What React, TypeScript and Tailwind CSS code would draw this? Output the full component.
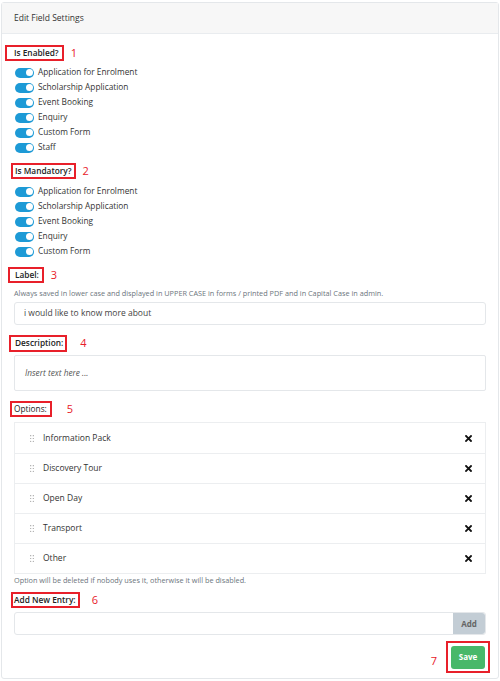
import React from "react"

const enabledForms = [
  "Application for Enrolment",
  "Scholarship Application",
  "Event Booking",
  "Enquiry",
  "Custom Form",
  "Staff",
]

const mandatoryForms = [
  "Application for Enrolment",
  "Scholarship Application",
  "Event Booking",
  "Enquiry",
  "Custom Form",
]

const options = ["Information Pack", "Discovery Tour", "Open Day", "Transport", "Other"]

function Toggle() {
  return (
    <span className="relative inline-flex h-[10px] w-[19px] shrink-0 items-center rounded-full bg-[#1d9ad6]">
      <span className="absolute right-[1.5px] h-[7px] w-[7px] rounded-full bg-white" />
    </span>
  )
}

function ToggleList({ items }: { items: string[] }) {
  return (
    <div className="flex flex-col">
      {items.map((item) => (
        <div key={item} className="flex h-[15px] items-center gap-[4px] pl-[1px]">
          <Toggle />
          <span className="text-[8.3px] text-[#333]">{item}</span>
        </div>
      ))}
    </div>
  )
}

function DragHandle() {
  return (
    <svg width="4" height="7" viewBox="0 0 4 7" className="text-[#999]">
      <circle cx="0.7" cy="0.7" r="0.6" fill="currentColor" />
      <circle cx="3.3" cy="0.7" r="0.6" fill="currentColor" />
      <circle cx="0.7" cy="3.5" r="0.6" fill="currentColor" />
      <circle cx="3.3" cy="3.5" r="0.6" fill="currentColor" />
      <circle cx="0.7" cy="6.3" r="0.6" fill="currentColor" />
      <circle cx="3.3" cy="6.3" r="0.6" fill="currentColor" />
    </svg>
  )
}

function Cross() {
  return (
    <svg width="7" height="7" viewBox="0 0 7 7">
      <path d="M1 1 L6 6 M6 1 L1 6" stroke="#111" strokeWidth="1.8" strokeLinecap="square" />
    </svg>
  )
}

export default function App() {
  return (
    <div className="h-[681px] w-[500px] bg-white px-[1px] pt-[2px] font-['Open_Sans',sans-serif]">
      <div className="rounded-[3px] border border-[#e4e7ea] bg-white">
        <div className="flex h-[31px] items-center border-b border-[#e9ecef] bg-[#f7f7f7] px-[12px] text-[8.5px] text-[#333]">
          Edit Field Settings
        </div>

        <div className="px-[12px] pb-[5px] pt-[11px]">
          {/* Is Enabled */}
          <div className="flex h-[16px] items-center">
            <span className="ml-[-9px] flex h-[16px] shrink-0 items-center whitespace-nowrap border-2 border-[#e8202a] pl-[7px] pr-[3px] text-[8.3px] font-semibold text-[#222]">
              Is Enabled?
            </span>
            <span className="ml-[7px] text-[11px] text-[#e8202a]">1</span>
          </div>
          <div className="mt-[4px]">
            <ToggleList items={enabledForms} />
          </div>

          {/* Is Mandatory */}
          <div className="mt-[8px] flex h-[16px] items-center">
            <span className="ml-[-3px] flex h-[16px] shrink-0 items-center whitespace-nowrap border-2 border-[#e8202a] pl-[2px] pr-[2px] text-[8.3px] font-semibold text-[#222]">
              Is Mandatory?
            </span>
            <span className="ml-[7px] text-[11px] text-[#e8202a]">2</span>
          </div>
          <div className="mt-[5px]">
            <ToggleList items={mandatoryForms} />
          </div>

          {/* Label */}
          <div className="mt-[8px] flex h-[16px] items-center">
            <span className="ml-[-6px] flex h-[16px] shrink-0 items-center whitespace-nowrap border-2 border-[#e8202a] pl-[5px] pr-[3px] text-[8.3px] font-semibold text-[#222]">
              Label:
            </span>
            <span className="ml-[7px] text-[11px] text-[#e8202a]">3</span>
          </div>
          <p className="mt-[5px] whitespace-nowrap text-[7.3px] leading-[10px] text-[#6c757d]">
            Always saved in lower case and displayed in UPPER CASE in forms / printed PDF and in Capital Case in admin.
          </p>
          <div className="mt-[4px] flex h-[23px] items-center rounded-[3px] border border-[#e4e7ea] px-[9px] text-[8.5px] text-[#444]">
            i would like to know more about
          </div>

          {/* Description */}
          <div className="mt-[10px] flex h-[17px] items-center">
            <span className="ml-[-5px] flex h-[17px] shrink-0 items-center whitespace-nowrap border-2 border-[#e8202a] pl-[4px] pr-[2px] text-[8.3px] font-semibold text-[#222]">
              Description:
            </span>
            <span className="ml-[13px] text-[11px] text-[#e8202a]">4</span>
          </div>
          <div className="mt-[3px] flex h-[36px] items-center rounded-[2px] border border-[#e4e7ea] px-[10px] text-[8.3px] italic text-[#555]">
            Insert text here ...
          </div>

          {/* Options */}
          <div className="mt-[10px] flex h-[16px] items-center">
            <span className="ml-[-4px] flex h-[16px] shrink-0 items-center whitespace-nowrap border-2 border-[#e8202a] pl-[2px] pr-[3px] text-[8.3px] text-[#222]">
              Options:
            </span>
            <span className="ml-[15px] text-[11px] text-[#e8202a]">5</span>
          </div>
          <div className="mt-[5px] border border-[#eceef0]">
            {options.map((opt, i) => (
              <div
                key={opt}
                className={
                  "flex h-[30px] items-center pl-[15px] pr-[13px] text-[8.5px] text-[#333]" +
                  (i > 0 ? " border-t border-[#eceef0]" : "")
                }
              >
                <DragHandle />
                <span className="ml-[9px] flex-1">{opt}</span>
                <Cross />
              </div>
            ))}
          </div>
          <p className="mt-[1px] whitespace-nowrap text-[7.3px] leading-[10px] text-[#6c757d]">
            Option will be deleted if nobody uses it, otherwise it will be disabled.
          </p>

          {/* Add New Entry */}
          <div className="mt-[7px] flex h-[16px] items-center">
            <span className="ml-[-3px] flex h-[16px] shrink-0 items-center whitespace-nowrap border-2 border-[#e8202a] pl-[1px] pr-[2px] text-[8.3px] font-semibold text-[#222]">
              Add New Entry:
            </span>
            <span className="ml-[12px] text-[11px] text-[#e8202a]">6</span>
          </div>
          <div className="mt-[4px] flex h-[23px] rounded-[3px] border border-[#e4e7ea]">
            <div className="flex-1" />
            <button className="w-[32px] rounded-r-[3px] bg-[#c3cdd5] text-[8px] font-bold text-[#666]">Add</button>
          </div>

          {/* Save */}
          <div className="mt-[6px] flex items-center justify-end">
            <span className="mr-[9px] mt-[8px] text-[11px] text-[#e8202a]">7</span>
            <div className="mr-[-4px] flex h-[32px] w-[44px] items-center justify-center border-2 border-[#e8202a]">
              <button className="h-[23px] w-[34px] rounded-[3px] bg-[#48b86a] text-[8px] font-bold text-white">Save</button>
            </div>
          </div>
        </div>
      </div>
    </div>
  )
}
